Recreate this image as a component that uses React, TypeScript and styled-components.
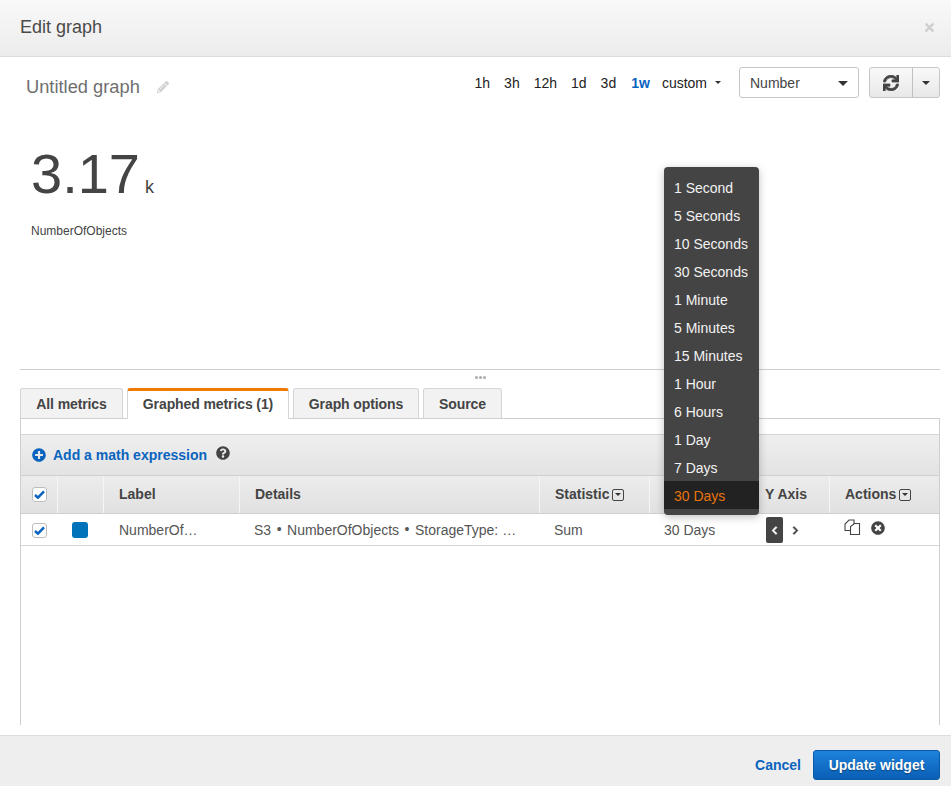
import React from "react";
import styled, { createGlobalStyle } from "styled-components";
import {
    FaChevronLeft,
    FaChevronRight,
    FaPencilAlt,
    FaPlusCircle,
    FaQuestionCircle,
    FaSync,
    FaTimes,
    FaTimesCircle,
} from "react-icons/fa";

const FONT = `"Liberation Sans", Arial, sans-serif`;
const BLUE = "#0a64bf";

const periods = [
    "1 Second",
    "5 Seconds",
    "10 Seconds",
    "30 Seconds",
    "1 Minute",
    "5 Minutes",
    "15 Minutes",
    "1 Hour",
    "6 Hours",
    "1 Day",
    "7 Days",
    "30 Days",
];

const ranges = ["1h", "3h", "12h", "1d", "3d", "1w"];

const GlobalStyle = createGlobalStyle`
    html, body {
        margin: 0;
        padding: 0;
        background: #fff;
        overflow: hidden;
    }
    * {
        box-sizing: border-box;
    }
`;

/* Modal frame */
const Modal = styled.div`
    position: relative;
    display: flex;
    flex-direction: column;
    width: 951px;
    height: 786px;
    font-family: ${FONT};
    color: #444;
    overflow: hidden;
`;

const ModalHeader = styled.header`
    display: flex;
    align-items: center;
    justify-content: space-between;
    flex: 0 0 57px;
    padding: 0 15px 2px 20px;
    background: linear-gradient(#f9f9f9, #ececec);
    border-bottom: 1px solid #dcdcdc;
    border-radius: 3px 3px 0 0;
`;

const ModalTitle = styled.h1`
    margin: 0;
    font-size: 18px;
    font-weight: 400;
    color: #4a4a4a;
`;

const CloseButton = styled.span`
    display: flex;
    color: #cfcfcf;
    font-size: 13px;
`;

const ModalBody = styled.main`
    flex: 1;
    display: flex;
    flex-direction: column;
    padding: 10px 11px 0 20px;
    background: #fff;
`;

const ModalFooter = styled.footer`
    flex: 0 0 51px;
    display: flex;
    align-items: flex-start;
    justify-content: flex-end;
    gap: 12px;
    padding: 14px 11px 0 0;
    background: #eee;
    border-top: 1px solid #dedede;
`;

/* Toolbar */
const Toolbar = styled.div`
    display: flex;
    align-items: center;
    height: 31px;
`;

const GraphTitle = styled.div`
    display: flex;
    align-items: center;
    gap: 17px;
    padding: 9px 0 0 6px;
    font-size: 18.3px;
    color: #6f6f6f;
    margin-right: auto;
`;

const PencilIcon = styled.span`
    display: flex;
    color: #d0d0d0;
    font-size: 12px;
`;

const RangeList = styled.div`
    display: flex;
    align-items: center;
    gap: 14px;
    margin-right: 18px;
    font-size: 14px;
    color: #222;
`;

const RangeItem = styled.span<{ $active?: boolean }>`
    margin-left: ${(p) => (p.$active ? "1px" : "0")};
    color: ${(p) => (p.$active ? BLUE : "#222")};
    font-weight: ${(p) => (p.$active ? 700 : 400)};
`;

const Custom = styled.span`
    display: flex;
    align-items: center;
    gap: 8px;
    margin-left: -2px;
`;

const Caret = styled.span<{ $size?: number; $color?: string }>`
    display: inline-block;
    width: 0;
    height: 0;
    border-left: ${(p) => p.$size ?? 3}px solid transparent;
    border-right: ${(p) => p.$size ?? 3}px solid transparent;
    border-top: ${(p) => p.$size ?? 3}px solid ${(p) => p.$color ?? "#333"};
`;

const Select = styled.div`
    display: flex;
    align-items: center;
    justify-content: space-between;
    width: 120px;
    height: 31px;
    padding: 1px 10px 0 10px;
    margin-right: 10px;
    font-size: 14px;
    color: #444;
    background: #fff;
    border: 1px solid #c6c6c6;
    border-radius: 3px;
`;

const SplitButton = styled.div`
    display: flex;
    width: 71px;
    height: 31px;
    background: linear-gradient(#f9f9f9, #e8e8e8);
    border: 1px solid #c6c6c6;
    border-radius: 3px;
`;

const RefreshPart = styled.span`
    flex: 0 0 43px;
    display: flex;
    align-items: center;
    justify-content: center;
    font-size: 16px;
    color: #444;
    border-right: 1px solid #c0c0c0;
    svg {
        stroke: currentColor;
        stroke-width: 25px;
    }
`;

const CaretPart = styled.span`
    flex: 1;
    display: flex;
    align-items: center;
    justify-content: center;
`;

/* Number widget */
const Widget = styled.section`
    flex: 0 0 272px;
    padding: 45px 0 0 11px;
    border-bottom: 1px solid #cfcfcf;
`;

const BigNumber = styled.div`
    display: flex;
    align-items: baseline;
    gap: 5px;
    height: 62px;
    line-height: 62px;
    font-size: 56px;
    color: #444;
`;

const Unit = styled.span`
    font-size: 18px;
`;

const MetricName = styled.div`
    margin-top: 19px;
    font-size: 12px;
    line-height: 14px;
    color: #444;
`;

const Handle = styled.div`
    display: flex;
    justify-content: center;
    gap: 1px;
    height: 18px;
    padding-top: 6px;
`;

const HandleDot = styled.span`
    width: 3px;
    height: 3px;
    border-radius: 50%;
    background: #aaa;
`;

/* Tabs */
const Tabs = styled.div`
    display: flex;
    gap: 4px;
    height: 31px;
    border-bottom: 1px solid #cfcfcf;
`;

const Tab = styled.div<{ $active?: boolean; $width: number }>`
    width: ${(p) => p.$width}px;
    height: ${(p) => (p.$active ? "31px" : "30px")};
    font-size: 14px;
    font-weight: 700;
    letter-spacing: -0.1px;
    text-align: center;
    line-height: ${(p) => (p.$active ? "27px" : "31px")};
    color: #444;
    background: ${(p) => (p.$active ? "#fff" : "#f2f2f2")};
    border: 1px solid #d5d5d5;
    border-top: ${(p) => (p.$active ? "3px solid #f27a00" : "1px solid #d5d5d5")};
    border-bottom: none;
    border-radius: 3px 3px 0 0;
`;

/* Metrics panel */
const Panel = styled.section`
    flex: 0 0 306px;
    padding-top: 15px;
    border-left: 1px solid #cfcfcf;
    border-right: 1px solid #cfcfcf;
`;

const PanelToolbar = styled.div`
    display: flex;
    align-items: center;
    height: 42px;
    padding-left: 11px;
    font-size: 14px;
    font-weight: 700;
    color: ${BLUE};
    background: linear-gradient(#efefef, #e3e3e3);
    border-top: 1px solid #d5d5d5;
    border-bottom: 1px solid #d0d0d0;
`;

const AddIcon = styled.span`
    display: flex;
    margin-right: 7px;
    font-size: 14px;
`;

const HelpIcon = styled.span`
    display: flex;
    margin: -4px 0 0 9px;
    font-size: 14px;
    color: #444;
`;

const COLUMNS = "37px 46px 136px 300px 110px 100px 80px 1fr";

const HeaderRow = styled.div`
    display: grid;
    grid-template-columns: ${COLUMNS};
    height: 38px;
    background: linear-gradient(#ececec, #e1e1e1);
    border-bottom: 1px solid #d0d0d0;
`;

const HeaderCell = styled.div<{ $pad?: number }>`
    display: flex;
    align-items: center;
    gap: 3px;
    padding-left: ${(p) => p.$pad ?? 15}px;
    padding-bottom: 1px;
    font-size: 14px;
    font-weight: 700;
    color: #444;
    border-right: 1px solid #f6f6f6;
    &:last-child {
        border-right: none;
    }
`;

const SortIcon = styled.span`
    display: inline-flex;
    align-items: center;
    justify-content: center;
    width: 12px;
    height: 12px;
    margin-top: 1px;
    border: 1.5px solid #444;
    border-radius: 2px;
`;

const DataRow = styled.div`
    display: grid;
    grid-template-columns: ${COLUMNS};
    height: 32px;
    border-bottom: 1px solid #d5d5d5;
`;

const DataCell = styled.div<{ $pad?: number }>`
    display: flex;
    align-items: center;
    padding-left: ${(p) => p.$pad ?? 14}px;
    padding-top: 1px;
    font-size: 14px;
    color: #555;
    white-space: nowrap;
`;

const Check = styled.span`
    display: flex;
    align-items: center;
    justify-content: center;
    width: 15px;
    height: 15px;
    background: #fff;
    border: 1px solid #bdbdbd;
    border-radius: 3px;
`;

const Swatch = styled.span`
    width: 16px;
    height: 16px;
    background: #0073bb;
    border-radius: 3px;
`;

const Bullet = styled.span`
    margin: -3px 5.5px 0;
    font-size: 14px;
`;

const AxisGroup = styled.div`
    display: flex;
    align-items: center;
    gap: 4px;
`;

const AxisButton = styled.span<{ $active?: boolean }>`
    display: flex;
    align-items: center;
    justify-content: center;
    width: 17px;
    height: 26px;
    font-size: 9px;
    color: ${(p) => (p.$active ? "#fff" : "#444")};
    background: ${(p) => (p.$active ? "#444" : "transparent")};
    border-radius: 2px;
    svg {
        stroke: currentColor;
        stroke-width: 40px;
    }
`;

const ActionGroup = styled.div`
    display: flex;
    align-items: center;
    gap: 10px;
    margin: -5px 0 0 14px;
    color: #444;
`;

const TimesIcon = styled.span`
    display: flex;
    font-size: 14px;
`;

/* Period dropdown */
const Dropdown = styled.ul`
    position: absolute;
    top: 167px;
    left: 664px;
    width: 95px;
    margin: 0;
    padding: 6px 0;
    list-style: none;
    background: #444;
    border-radius: 4px;
    box-shadow: 0 2px 8px rgba(0, 0, 0, 0.25);
`;

const DropdownItem = styled.li<{ $active?: boolean }>`
    height: 28px;
    padding-left: 10px;
    font-size: 14px;
    line-height: 30px;
    color: ${(p) => (p.$active ? "#e8730c" : "#f2f2f2")};
    background: ${(p) => (p.$active ? "#222" : "transparent")};
`;

/* Footer buttons */
const CancelLink = styled.span`
    font-size: 14px;
    line-height: 30px;
    font-weight: 700;
    color: ${BLUE};
`;

const PrimaryButton = styled.span`
    display: flex;
    align-items: center;
    justify-content: center;
    width: 127px;
    height: 30px;
    font-size: 14px;
    font-weight: 700;
    color: #fff;
    text-shadow: 0 1px 1px rgba(0, 0, 0, 0.4);
    background: linear-gradient(#1e82dc, #0a5fb4);
    border: 1px solid #0a5aa8;
    border-radius: 3px;
`;

const CheckMark = () => (
    <svg width="11" height="9" viewBox="0 0 12 10">
        <path d="M1 5.5 L4.3 8.5 L11 1.5" fill="none" stroke="#0a64bf" strokeWidth="2.8" />
    </svg>
);

const CopyIcon = () => (
    <svg width="17" height="17" viewBox="0 0 17 17" fill="#fff" stroke="#444" strokeWidth="1.1">
        <path d="M1 11.5 V5 L5 1 H10 V11.5 Z" />
        <path d="M6.5 15.5 V7.5 L10.5 4.5 H15.5 V15.5 Z" />
    </svg>
);

export default function App() {
    return (
        <>
            <GlobalStyle />
            <Modal>
                <ModalHeader>
                    <ModalTitle>Edit graph</ModalTitle>
                    <CloseButton>
                        <FaTimes />
                    </CloseButton>
                </ModalHeader>

                <ModalBody>
                    <Toolbar>
                        <GraphTitle>
                            Untitled graph
                            <PencilIcon>
                                <FaPencilAlt />
                            </PencilIcon>
                        </GraphTitle>
                        <RangeList>
                            {ranges.map((range) => (
                                <RangeItem key={range} $active={range === "1w"}>
                                    {range}
                                </RangeItem>
                            ))}
                            <Custom>
                                custom <Caret />
                            </Custom>
                        </RangeList>
                        <Select>
                            Number <Caret $size={5} />
                        </Select>
                        <SplitButton>
                            <RefreshPart>
                                <FaSync />
                            </RefreshPart>
                            <CaretPart>
                                <Caret $size={4} />
                            </CaretPart>
                        </SplitButton>
                    </Toolbar>

                    <Widget>
                        <BigNumber>
                            3.17
                            <Unit>k</Unit>
                        </BigNumber>
                        <MetricName>NumberOfObjects</MetricName>
                    </Widget>

                    <Handle>
                        <HandleDot />
                        <HandleDot />
                        <HandleDot />
                    </Handle>

                    <Tabs>
                        <Tab $width={103}>All metrics</Tab>
                        <Tab $width={162} $active>
                            Graphed metrics (1)
                        </Tab>
                        <Tab $width={126}>Graph options</Tab>
                        <Tab $width={79}>Source</Tab>
                    </Tabs>

                    <Panel>
                        <PanelToolbar>
                            <AddIcon>
                                <FaPlusCircle />
                            </AddIcon>
                            Add a math expression
                            <HelpIcon>
                                <FaQuestionCircle />
                            </HelpIcon>
                        </PanelToolbar>

                        <HeaderRow>
                            <HeaderCell $pad={11}>
                                <Check>
                                    <CheckMark />
                                </Check>
                            </HeaderCell>
                            <HeaderCell />
                            <HeaderCell>Label</HeaderCell>
                            <HeaderCell>Details</HeaderCell>
                            <HeaderCell>
                                Statistic
                                <SortIcon>
                                    <Caret />
                                </SortIcon>
                            </HeaderCell>
                            <HeaderCell />
                            <HeaderCell>Y Axis</HeaderCell>
                            <HeaderCell>
                                Actions
                                <SortIcon>
                                    <Caret />
                                </SortIcon>
                            </HeaderCell>
                        </HeaderRow>

                        <DataRow>
                            <DataCell $pad={11}>
                                <Check>
                                    <CheckMark />
                                </Check>
                            </DataCell>
                            <DataCell>
                                <Swatch />
                            </DataCell>
                            <DataCell $pad={15}>NumberOf…</DataCell>
                            <DataCell>
                                S3<Bullet>•</Bullet>NumberOfObjects<Bullet>•</Bullet>StorageType: …
                            </DataCell>
                            <DataCell>Sum</DataCell>
                            <DataCell>30 Days</DataCell>
                            <DataCell $pad={16}>
                                <AxisGroup>
                                    <AxisButton $active>
                                        <FaChevronLeft />
                                    </AxisButton>
                                    <AxisButton>
                                        <FaChevronRight />
                                    </AxisButton>
                                </AxisGroup>
                            </DataCell>
                            <DataCell $pad={0}>
                                <ActionGroup>
                                    <CopyIcon />
                                    <TimesIcon>
                                        <FaTimesCircle />
                                    </TimesIcon>
                                </ActionGroup>
                            </DataCell>
                        </DataRow>
                    </Panel>
                </ModalBody>

                <ModalFooter>
                    <CancelLink>Cancel</CancelLink>
                    <PrimaryButton>Update widget</PrimaryButton>
                </ModalFooter>

                <Dropdown>
                    {periods.map((period) => (
                        <DropdownItem key={period} $active={period === "30 Days"}>
                            {period}
                        </DropdownItem>
                    ))}
                </Dropdown>
            </Modal>
        </>
    );
}
